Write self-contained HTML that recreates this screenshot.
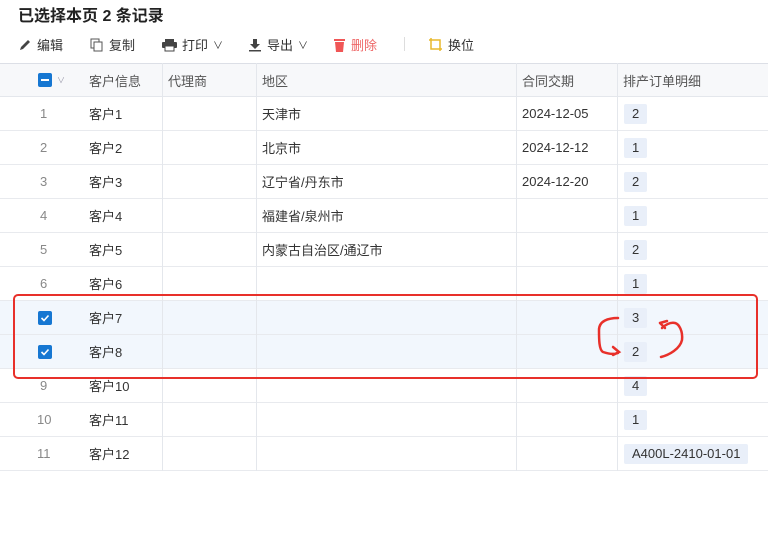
<!DOCTYPE html>
<html><head><meta charset="utf-8"><style>
*{margin:0;padding:0;box-sizing:border-box}
body{width:768px;height:550px;background:#fff;font-family:"Liberation Sans","Noto Sans CJK SC",sans-serif;color:#333;position:relative;overflow:hidden;font-size:13px}
.title{position:absolute;left:18px;top:2px;font-size:16px;font-weight:bold;color:#222}
.tb{position:absolute;top:35px;font-size:13px;color:#333;display:flex;align-items:center;gap:5px}
.hdr{position:absolute;left:0;top:63px;width:768px;height:34px;background:#f7f8fa;border-top:1px solid #dcdfe6;border-bottom:1px solid #e4e7ec}
.row{position:absolute;left:0;width:768px;height:34px;border-bottom:1px solid #e8eaee}
.c{position:absolute;top:0;height:100%;display:flex;align-items:center;font-size:13px}
.vl{position:absolute;top:63px;width:1px;height:408px;background:#e4e7ec}
.b{background:#e9eff9;padding:0 8px;height:20px;line-height:20px;border-radius:2px;color:#333}
.cb{width:14px;height:14px;background:#1677d2;border-radius:2px;position:absolute;left:38px;top:10px}
</style></head><body>
<div class="title">已选择本页 2 条记录</div>
<div class="tb" style="left:18px"><svg width="14" height="14" viewBox="0 0 14 14"><path d="M2 12l1-3 7-7 2 2-7 7z" fill="#444"/></svg>编辑</div>
<div class="tb" style="left:90px"><svg width="14" height="14" viewBox="0 0 14 14"><rect x="1" y="1" width="8" height="9" fill="none" stroke="#555"/><rect x="4" y="4" width="8" height="9" fill="#fff" stroke="#555"/></svg>复制</div>
<div class="tb" style="left:162px"><svg width="15" height="14" viewBox="0 0 15 14"><rect x="3" y="1" width="9" height="3" fill="#444"/><rect x="0" y="4" width="15" height="6" rx="1" fill="#444"/><rect x="3" y="8" width="9" height="5" fill="#fff" stroke="#444"/></svg>打印<span style="font-size:10px">∨</span></div>
<div class="tb" style="left:248px"><svg width="14" height="14" viewBox="0 0 14 14"><path d="M5 1h4v5h3l-5 5-5-5h3z" fill="#444"/><rect x="1" y="12" width="12" height="1.5" fill="#444"/></svg>导出<span style="font-size:10px">∨</span></div>
<div class="tb" style="left:333px;color:#e66"><svg width="13" height="14" viewBox="0 0 13 14"><rect x="1" y="1" width="11" height="2" fill="#f05656"/><path d="M2 4h9l-1 10H3z" fill="#f05656"/></svg>删除</div>
<div style="position:absolute;left:404px;top:37px;width:1px;height:14px;background:#ddd"></div>
<div class="tb" style="left:428px"><svg width="15" height="15" viewBox="0 0 15 15"><path d="M3 1v11h11M1 3h11v11" fill="none" stroke="#e8b92c" stroke-width="1.5"/></svg>换位</div>

<div class="hdr">
<div class="cb" style="top:9px"><div style="position:absolute;left:3px;top:6px;width:8px;height:2px;background:#fff"></div></div>
<div class="c" style="left:57px;font-size:8px;color:#99a">∨</div>
<div class="c" style="left:89px;color:#555">客户信息</div>
<div class="c" style="left:168px;color:#555">代理商</div>
<div class="c" style="left:262px;color:#555">地区</div>
<div class="c" style="left:522px;color:#555">合同交期</div>
<div class="c" style="left:623px;color:#555">排产订单明细</div>
</div>

<div class="row" style="top:97px"><div class="c" style="left:40px;color:#888">1</div><div class="c" style="left:89px">客户1</div><div class="c" style="left:262px">天津市</div><div class="c" style="left:522px">2024-12-05</div><div class="c" style="left:624px"><span class="b">2</span></div></div>
<div class="row" style="top:131px"><div class="c" style="left:40px;color:#888">2</div><div class="c" style="left:89px">客户2</div><div class="c" style="left:262px">北京市</div><div class="c" style="left:522px">2024-12-12</div><div class="c" style="left:624px"><span class="b">1</span></div></div>
<div class="row" style="top:165px"><div class="c" style="left:40px;color:#888">3</div><div class="c" style="left:89px">客户3</div><div class="c" style="left:262px">辽宁省/丹东市</div><div class="c" style="left:522px">2024-12-20</div><div class="c" style="left:624px"><span class="b">2</span></div></div>
<div class="row" style="top:199px"><div class="c" style="left:40px;color:#888">4</div><div class="c" style="left:89px">客户4</div><div class="c" style="left:262px">福建省/泉州市</div><div class="c" style="left:624px"><span class="b">1</span></div></div>
<div class="row" style="top:233px"><div class="c" style="left:40px;color:#888">5</div><div class="c" style="left:89px">客户5</div><div class="c" style="left:262px">内蒙古自治区/通辽市</div><div class="c" style="left:624px"><span class="b">2</span></div></div>
<div class="row" style="top:267px"><div class="c" style="left:40px;color:#888">6</div><div class="c" style="left:89px">客户6</div><div class="c" style="left:624px"><span class="b">1</span></div></div>
<div class="row" style="top:301px;background:#f2f7fd"><div class="cb"><svg width="14" height="14" viewBox="0 0 14 14"><path d="M3.5 7l2.5 2.5 4.5-5" fill="none" stroke="#fff" stroke-width="1.6"/></svg></div><div class="c" style="left:89px">客户7</div><div class="c" style="left:624px"><span class="b">3</span></div></div>
<div class="row" style="top:335px;background:#f2f7fd"><div class="cb"><svg width="14" height="14" viewBox="0 0 14 14"><path d="M3.5 7l2.5 2.5 4.5-5" fill="none" stroke="#fff" stroke-width="1.6"/></svg></div><div class="c" style="left:89px">客户8</div><div class="c" style="left:624px"><span class="b">2</span></div></div>
<div class="row" style="top:369px"><div class="c" style="left:40px;color:#888">9</div><div class="c" style="left:89px">客户10</div><div class="c" style="left:624px"><span class="b">4</span></div></div>
<div class="row" style="top:403px"><div class="c" style="left:37px;color:#888">10</div><div class="c" style="left:89px">客户11</div><div class="c" style="left:624px"><span class="b">1</span></div></div>
<div class="row" style="top:437px"><div class="c" style="left:37px;color:#888">11</div><div class="c" style="left:89px">客户12</div><div class="c" style="left:624px"><span class="b">A400L-2410-01-01</span></div></div>

<div class="vl" style="left:162px"></div>
<div class="vl" style="left:256px"></div>
<div class="vl" style="left:516px"></div>
<div class="vl" style="left:617px"></div>

<svg style="position:absolute;left:0;top:0" width="768" height="550">
<rect x="14" y="295" width="743" height="83" rx="4" fill="none" stroke="#e8302a" stroke-width="2"/>
<path d="M618 318c-10 0-19 3-19 12s0 20 4 22c3 1 10 3 15 1M613 347l6 5-6 3" fill="none" stroke="#e8302a" stroke-width="2.5" stroke-linecap="round"/>
<path d="M661 357c8-2 19-8 21-17 1-9-3-16-7-17-5-1-10 2-13 5M660 323l5 5M660 323l7-2" fill="none" stroke="#e8302a" stroke-width="2.5" stroke-linecap="round"/>
</svg>
</body></html>
